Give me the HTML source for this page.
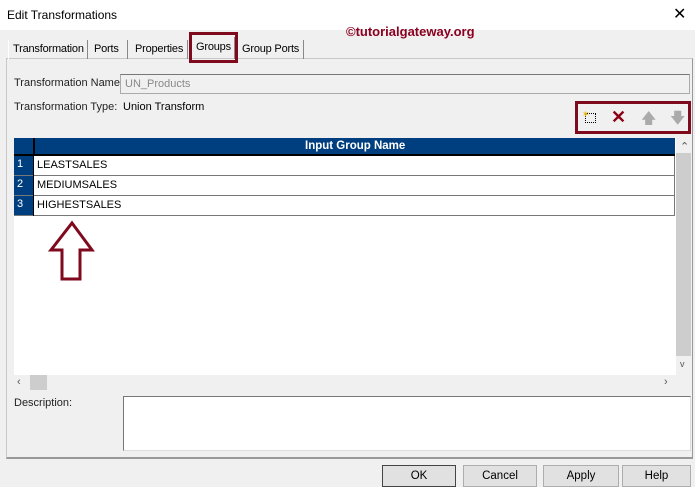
<!DOCTYPE html>
<html><head><meta charset="utf-8"><style>
*{margin:0;padding:0;box-sizing:border-box}
body{width:695px;height:485px;background:#f0f0f0;font-family:"Liberation Sans",sans-serif;font-size:11px;color:#000;position:relative;overflow:hidden}
.a{position:absolute}
.tab{position:absolute;top:40px;height:19px;border-right:1px solid #888;padding:3px 0 0 4px;font-size:11px;white-space:nowrap;letter-spacing:-0.2px}
.row{position:absolute;left:14px;width:661px;height:20px;border-bottom:1px solid #777;background:#fff}
.row .n{position:absolute;left:0;top:0;width:19px;height:19px;background:#003f7f;color:#fff;padding:2px 0 0 3px}
.row .t{position:absolute;left:23px;top:3px}
.btn{position:absolute;top:465px;height:22px;border:1px solid #adadad;background:#e1e1e1;text-align:center;padding-top:4px;font-size:11.5px}
</style></head><body>
<div class="a" style="left:0;top:0;width:695px;height:30px;background:#fff"></div>
<div class="a" style="left:7px;top:8px;font-size:12px">Edit Transformations</div>
<div class="a" style="left:673px;top:4px;font-size:16px">✕</div>
<div class="a" style="left:346px;top:24px;color:#8b0020;font-weight:bold;font-size:13px">©tutorialgateway.org</div>

<div class="a" style="left:6px;top:58px;width:687px;height:401px;border:1px solid #c8c8c8;border-bottom:2px solid #999;border-right:1px solid #999"></div>
<div class="tab" style="left:8px;width:80px;border-left:1px solid #fff">Transformation</div>
<div class="tab" style="left:90px;width:38px">Ports</div>
<div class="tab" style="left:131px;width:57px">Properties</div>
<div class="tab" style="left:192px;top:37px;height:22px;width:43px;padding-top:4px">Groups</div>
<div class="tab" style="left:238px;width:66px">Group Ports</div>
<div class="a" style="left:189px;top:32px;width:49px;height:31px;border:3px solid #7f0a1e"></div>

<div class="a" style="left:14px;top:77px;color:#222">Transformation Name:</div>
<div class="a" style="left:120px;top:74px;width:570px;height:20px;border:1px solid #aaa;border-top-color:#777;background:#f0f0f0;color:#888;padding:3px 0 0 4px">UN_Products</div>
<div class="a" style="left:14px;top:101px;color:#222">Transformation Type:</div>
<div class="a" style="left:123px;top:101px">Union Transform</div>

<div class="a" style="left:575px;top:101px;width:116px;height:33px;border:3px solid #7f0a1e"></div>
<div class="a" style="left:585px;top:113px;width:11px;height:10px;border:1px dotted #000"></div>
<div class="a" style="left:582px;top:109px;color:#e8b000;font-size:9px">✶</div>
<div class="a" style="left:611px;top:107px;color:#8b0014;font-size:18px;font-weight:bold">✕</div>
<div class="a" style="left:641px;top:108px;color:#aaa;font-size:15px">🡅</div>
<div class="a" style="left:670px;top:108px;color:#aaa;font-size:15px">🡇</div>

<div class="a" style="left:14px;top:138px;width:662px;height:237px;background:#fff"></div>
<div class="a" style="left:14px;top:138px;width:661px;height:18px;background:#003f7f;border-bottom:2px solid #000"></div>
<div class="a" style="left:33px;top:138px;width:2px;height:18px;background:#000"></div>
<div class="a" style="left:305px;top:140px;color:#fff;font-weight:bold;font-size:11.5px">Input Group Name</div>
<div class="row" style="top:156px"><div class="n">1</div><div class="t">LEASTSALES</div></div>
<div class="row" style="top:176px"><div class="n">2</div><div class="t">MEDIUMSALES</div></div>
<div class="row" style="top:196px"><div class="n">3</div><div class="t">HIGHESTSALES</div></div>
<div class="a" style="left:674px;top:156px;width:1px;height:60px;background:#777"></div>
<div class="a" style="left:33px;top:156px;width:1px;height:60px;background:#000"></div>
<svg class="a" style="left:48px;top:220px" width="48" height="62"><path d="M24 3 L44 30 L32 30 L32 59 L14 59 L14 30 L3 30 Z" fill="#fff" stroke="#7f0a1e" stroke-width="3"/></svg>

<div class="a" style="left:676px;top:138px;width:16px;height:237px;background:#f0f0f0"></div>
<div class="a" style="left:680px;top:140px;color:#555;font-size:11px">⌃</div>
<div class="a" style="left:676px;top:153px;width:15px;height:203px;background:#cdcdcd"></div>
<div class="a" style="left:680px;top:359px;color:#555;font-size:9px">v</div>
<div class="a" style="left:14px;top:375px;width:662px;height:16px;background:#f0f0f0"></div>
<div class="a" style="left:17px;top:376px;color:#555;font-size:11px">‹</div>
<div class="a" style="left:30px;top:375px;width:17px;height:15px;background:#cdcdcd"></div>
<div class="a" style="left:664px;top:376px;color:#555;font-size:11px">›</div>

<div class="a" style="left:14px;top:397px;color:#222">Description:</div>
<div class="a" style="left:123px;top:396px;width:568px;height:55px;border:1px solid #777;border-right-color:#ddd;border-bottom-color:#ddd;background:#fff"></div>

<div class="btn" style="left:382px;width:74px;border:1px solid #444">OK</div>
<div class="btn" style="left:463px;width:74px">Cancel</div>
<div class="btn" style="left:543px;width:76px">Apply</div>
<div class="btn" style="left:622px;width:69px">Help</div>
</body></html>
